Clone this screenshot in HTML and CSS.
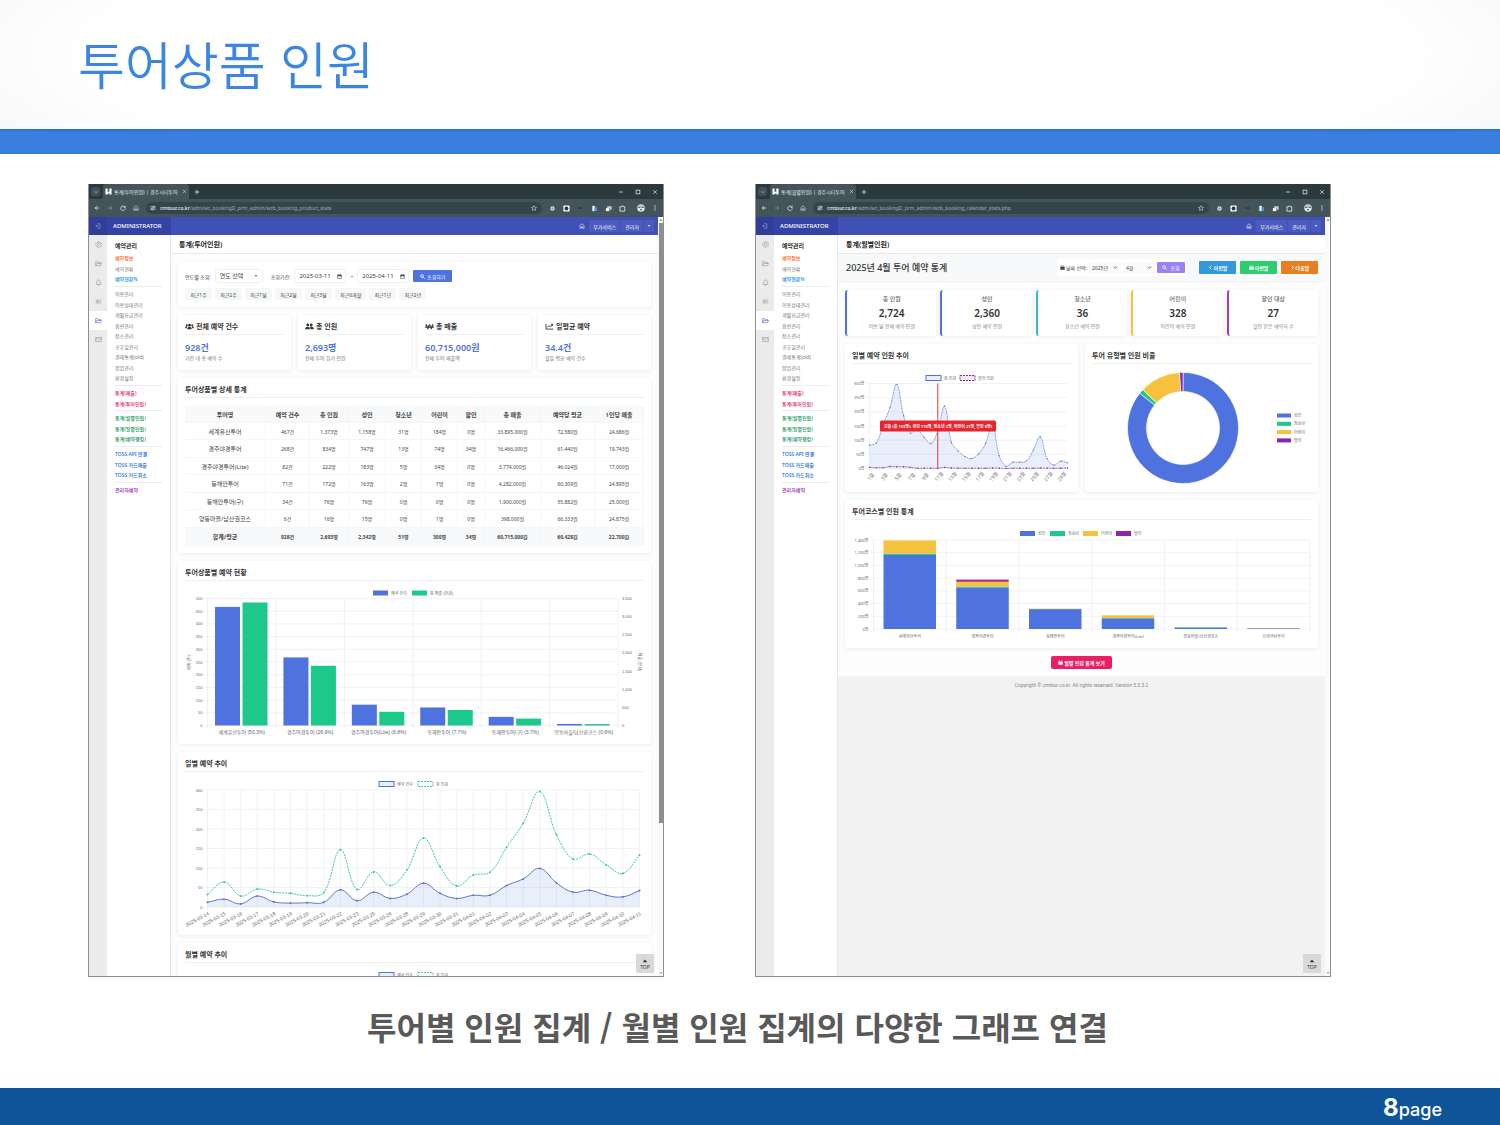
FILE: index.html
```
<!DOCTYPE html>
<html lang="ko">
<head>
  <meta charset="UTF-8">
  <meta name="viewport" content="width=device-width, initial-scale=1.0">
  <title>투어상품 인원</title>
  <link rel="stylesheet" href="styles.css">
</head>
<body>
  <!-- Shared icons -->
  <svg class="sprite" xmlns="http://www.w3.org/2000/svg">
    <symbol id="i-back" viewBox="0 0 16 16"><path d="M14 8H3M8 3L3 8l5 5" fill="none" stroke="currentColor" stroke-width="2"/></symbol>
    <symbol id="i-forward" viewBox="0 0 16 16"><path d="M2 8h11M8 3l5 5-5 5" fill="none" stroke="currentColor" stroke-width="2"/></symbol>
    <symbol id="i-reload" viewBox="0 0 16 16"><path d="M13 5.500A6 6 0 1 0 14 9M14 2v4.500H9.500" fill="none" stroke="currentColor" stroke-width="2"/></symbol>
    <symbol id="i-home" viewBox="0 0 16 16"><path d="M2.500 7L8 2l5.500 5v7h-4v-4h-3v4h-4z" fill="none" stroke="currentColor" stroke-width="1.600"/></symbol>
    <symbol id="i-tune" viewBox="0 0 16 16"><path d="M1 5h6M13 5h2M1 11h2M9 11h6" stroke="currentColor" stroke-width="2"/><circle cx="10" cy="5" r="2.500" fill="none" stroke="currentColor" stroke-width="2"/><circle cx="6" cy="11" r="2.500" fill="none" stroke="currentColor" stroke-width="2"/></symbol>
    <symbol id="i-star" viewBox="0 0 16 16"><path d="M8 1.500l2 4.500 4.800.5-3.600 3.200 1 4.800L8 12l-4.200 2.500 1-4.800L1.200 6.500 6 6z" fill="none" stroke="currentColor" stroke-width="1.400"/></symbol>
    <symbol id="i-down" viewBox="0 0 16 16"><path d="M3 5l5 6 5-6z" fill="currentColor"/></symbol>
    <symbol id="i-chevron" viewBox="0 0 16 16"><path d="M3 5.500l5 5 5-5" fill="none" stroke="currentColor" stroke-width="2.500"/></symbol>
    <symbol id="i-close" viewBox="0 0 16 16"><path d="M3 3l10 10M13 3L3 13" stroke="currentColor" stroke-width="1.800"/></symbol>
    <symbol id="i-plus" viewBox="0 0 16 16"><path d="M8 2v12M2 8h12" stroke="currentColor" stroke-width="2"/></symbol>
    <symbol id="i-min" viewBox="0 0 16 16"><path d="M3 8h10" stroke="currentColor" stroke-width="2"/></symbol>
    <symbol id="i-max" viewBox="0 0 16 16"><rect x="3" y="3" width="10" height="10" fill="none" stroke="currentColor" stroke-width="2"/></symbol>
    <symbol id="i-dots" viewBox="0 0 16 16"><g fill="currentColor"><circle cx="8" cy="2.500" r="1.800"/><circle cx="8" cy="8" r="1.800"/><circle cx="8" cy="13.500" r="1.800"/></g></symbol>
    <symbol id="i-blob" viewBox="0 0 16 16"><circle cx="8" cy="8" r="5" fill="#dfe5e8"/><path d="M8 2v12M2 8h12" stroke="#93a1a8" stroke-width="2"/></symbol>
    <symbol id="i-capture" viewBox="0 0 16 16"><rect x="1" y="1" width="14" height="14" rx="2" fill="#fff"/><circle cx="8" cy="8" r="4.500" fill="#2c383d"/></symbol>
    <symbol id="i-dark" viewBox="0 0 16 16"><path d="M3 5h10v4H3z" fill="#2f3c42"/></symbol>
    <symbol id="i-doc" viewBox="0 0 16 16"><path d="M3 2h6v12H3z" fill="#e9f1fb"/><path d="M8 5h6v9H8z" fill="#4a8ddb"/></symbol>
    <symbol id="i-cast" viewBox="0 0 16 16"><path d="M5 3h10v8h-4V7H5z" fill="#c6ced2"/><path d="M2 7h8v7H2z" fill="#f4f6f7"/></symbol>
    <symbol id="i-puzzle" viewBox="0 0 16 16"><path d="M2 4h4a2 2 0 0 1 4 0h3v4a2 2 0 0 1 0 3v3H2v-4a2 2 0 0 0 0-3z" fill="none" stroke="#fff" stroke-width="1.800"/></symbol>
    <symbol id="i-face" viewBox="0 0 16 16"><circle cx="8" cy="8" r="7.500" fill="#e6e6e6"/><path d="M2 6.500h5M9 6.500h5M6 11.500h4" stroke="#444" stroke-width="2"/><path d="M3 3.500h10" stroke="#999" stroke-width="1.500"/></symbol>
    <symbol id="i-logo" viewBox="0 0 16 16"><path d="M1 1h5v14H1zM10 1h5v14h-5zM6 10l4-3v4l-4 3z" fill="#fff"/></symbol>
    <symbol id="i-out" viewBox="0 0 16 16"><path d="M6 2h7v12H6M2 8h7M5 5L2 8l3 3" fill="none" stroke="currentColor" stroke-width="1.500"/></symbol>
    <symbol id="i-gear" viewBox="0 0 16 16"><path d="M6.500 1.500h3l.5 2 2 1 2-.5 1 2.500-1.500 1.500.5 2 1 1.500-2 2-2-.5-1.500 1.500h-3L6 12.500l-2 .5-2-2 .5-2L1 7.500l1-2.500 2 .0 2-1.500z" fill="none" stroke="currentColor"/><circle cx="8" cy="8" r="2.500" fill="none" stroke="currentColor"/></symbol>
    <symbol id="i-folder" viewBox="0 0 16 16"><path d="M1.500 13V3.500h4l1.500 2h6V8M1.500 13L4 8h11l-2.500 5z" fill="none" stroke="currentColor" stroke-width="1.200"/></symbol>
    <symbol id="i-bell" viewBox="0 0 16 16"><path d="M2.500 12.500h11L12 10V6a4 4 0 0 0-8 0v4zM6.500 14.500h3" fill="none" stroke="currentColor" stroke-width="1.200"/></symbol>
    <symbol id="i-card" viewBox="0 0 16 16"><path d="M1.500 4.500h13M1.500 8h13M1.500 11.500h13M5 4v8" stroke="currentColor" stroke-width="1"/></symbol>
    <symbol id="i-mail" viewBox="0 0 16 16"><path d="M1.500 3.500h13v9h-13zM1.500 4L8 9l6.500-5" fill="none" stroke="currentColor" stroke-width="1.200"/></symbol>
    <symbol id="i-search" viewBox="0 0 16 16"><circle cx="6.500" cy="6.500" r="4.500" fill="none" stroke="currentColor" stroke-width="2.400"/><path d="M10 10l5 5" stroke="currentColor" stroke-width="2.800"/></symbol>
    <symbol id="i-cal" viewBox="0 0 16 16"><path d="M2 3h12v11H2z" fill="none" stroke="currentColor" stroke-width="1.800"/><path d="M2 3h12v4H2zM4 1h2v3H4zM10 1h2v3h-2z" fill="currentColor"/></symbol>
    <symbol id="i-calfull" viewBox="0 0 16 16"><path d="M1 3h2V1h2v2h6V1h2v2h2v2H1zM1 6h14v9H1z" fill="currentColor"/></symbol>
    <symbol id="i-users" viewBox="0 0 20 16"><g fill="currentColor"><circle cx="10" cy="5" r="3.200"/><circle cx="3.800" cy="5" r="2.200"/><circle cx="16.200" cy="5" r="2.200"/><path d="M5 14c0-7 10-7 10 0zM0 12c0-5 4-5 5-3.500-1 1-1.500 2-1.500 3.500zM20 12c0-5-4-5-5-3.500 1 1 1.500 2 1.500 3.500z"/></g></symbol>
    <symbol id="i-pair" viewBox="0 0 20 16"><g fill="currentColor"><circle cx="6" cy="4.500" r="3.200"/><circle cx="14" cy="4.500" r="3.200"/><path d="M0 14c0-7 11-7 11 0zM12 14c0-3-.5-4-1.500-5 4-2 9.500 0 9.500 5z"/></g></symbol>
    <symbol id="i-won" viewBox="0 0 20 16"><path d="M2 2l4 12L10 3l4 11 4-12M0 7h20M0 10h20" fill="none" stroke="currentColor" stroke-width="2"/></symbol>
    <symbol id="i-trend" viewBox="0 0 20 16"><path d="M2 2v12h17M5 10l4-4 3 3 5-6M13 3h4v4" fill="none" stroke="currentColor" stroke-width="2"/></symbol>
    <symbol id="i-left" viewBox="0 0 16 16"><path d="M10.500 2l-6 6 6 6" fill="none" stroke="currentColor" stroke-width="2.800"/></symbol>
    <symbol id="i-right" viewBox="0 0 16 16"><path d="M5.500 2l6 6-6 6" fill="none" stroke="currentColor" stroke-width="2.800"/></symbol>
    <symbol id="i-up" viewBox="0 0 16 16"><path d="M2 11l6-7 6 7z" fill="currentColor"/></symbol>
  </svg>

  <header class="slide-header">
    <h1>투어상품 인원</h1>
  </header>

  <main class="slide-body">
    <div class="windows">

      <!-- Product statistics -->
      <section class="window">
        <div class="tabbar">
          <button class="tab-search" aria-label="탭 검색"><svg class="ico"><use href="#i-chevron"/></svg></button>
          <div class="tab"><svg class="ico logo"><use href="#i-logo"/></svg><span>통계(투어인원) | 경주시티투어</span><svg class="ico"><use href="#i-close"/></svg></div>
          <svg class="ico"><use href="#i-plus"/></svg>
          <div class="win-controls"><svg class="ico"><use href="#i-min"/></svg><svg class="ico"><use href="#i-max"/></svg><svg class="ico"><use href="#i-close"/></svg></div>
        </div>
        <div class="toolbar">
          <svg class="ico"><use href="#i-back"/></svg>
          <svg class="ico dim"><use href="#i-forward"/></svg>
          <svg class="ico"><use href="#i-reload"/></svg>
          <svg class="ico"><use href="#i-home"/></svg>
          <div class="address"><svg class="ico"><use href="#i-tune"/></svg><span class="url"><b>cmtour.co.kr</b>/adm/wz_bookingD_prm_admin/wzb_booking_product_stats</span><svg class="ico"><use href="#i-star"/></svg></div>
          <div class="extensions">
            <svg class="ico"><use href="#i-blob"/></svg><svg class="ico"><use href="#i-capture"/></svg><svg class="ico"><use href="#i-dark"/></svg><svg class="ico"><use href="#i-doc"/></svg><svg class="ico"><use href="#i-cast"/></svg><svg class="ico"><use href="#i-puzzle"/></svg>
          </div>
          <svg class="ico face"><use href="#i-face"/></svg>
          <svg class="ico"><use href="#i-dots"/></svg>
        </div>
        <div class="viewport">
          <div class="app">
            <div class="app-header">
              <span class="app-toggle"><svg class="ico"><use href="#i-out"/></svg></span>
              <strong class="brand">ADMINISTRATOR</strong>
              <div class="app-nav">
                <svg class="ico"><use href="#i-home"/></svg>
                <button>부가서비스</button>
                <button>관리자</button>
                <button aria-label="메뉴"><svg class="ico"><use href="#i-down"/></svg></button>
              </div>
            </div>
            <div class="app-body">
              <div class="rail">
                <span><svg class="ico"><use href="#i-gear"/></svg></span>
                <span><svg class="ico"><use href="#i-folder"/></svg></span>
                <span><svg class="ico"><use href="#i-bell"/></svg></span>
                <span><svg class="ico"><use href="#i-card"/></svg></span>
                <span class="active"><svg class="ico"><use href="#i-folder"/></svg></span>
                <span><svg class="ico"><use href="#i-mail"/></svg></span>
              </div>
              <nav class="side">
                <h2>예약관리</h2>
                <ul>
                  <li class="orange"><a href="#">예약정보</a></li>
                  <li><a href="#">예약현황</a></li>
                  <li class="sky"><a href="#">예약현황N</a></li>
                </ul>
                <ul>
                  <li><a href="#">이용관리</a></li>
                  <li><a href="#">이용상태관리</a></li>
                  <li><a href="#">개별요금관리</a></li>
                  <li><a href="#">옵션관리</a></li>
                  <li><a href="#">장소관리</a></li>
                  <li><a href="#">공휴일관리</a></li>
                  <li><a href="#">결제통계(old)</a></li>
                  <li><a href="#">팝업관리</a></li>
                  <li><a href="#">환경설정</a></li>
                </ul>
                <ul class="pink">
                  <li><a href="#">통계(매출)</a></li>
                  <li><a href="#">통계(투어인원)</a></li>
                </ul>
                <ul class="green">
                  <li><a href="#">통계(월별인원)</a></li>
                  <li><a href="#">통계(일별인원)</a></li>
                  <li><a href="#">통계(예약랭킹)</a></li>
                </ul>
                <ul class="blue">
                  <li><a href="#">TOSS API 연결</a></li>
                  <li><a href="#">TOSS 카드매출</a></li>
                  <li><a href="#">TOSS 카드취소</a></li>
                </ul>
                <ul class="purple">
                  <li><a href="#">관리자예약</a></li>
                </ul>
              </nav>
              <div class="content">
                <h2 class="page-title">통계(투어인원)</h2>
                <div class="stack">
                  <form class="card filter">
                    <div class="filter-row">
                      <label for="year">연도별 조회:</label>
                      <span class="select"><select id="year"><option>연도 선택</option></select><svg class="ico"><use href="#i-down"/></svg></span>
                      <label for="from">조회기간:</label>
                      <span class="date"><input id="from" type="text" value="2025-03-11"><svg class="ico"><use href="#i-cal"/></svg></span>
                      <span>~</span>
                      <span class="date"><input type="text" value="2025-04-11" aria-label="종료일"><svg class="ico"><use href="#i-cal"/></svg></span>
                      <button type="button" class="btn-search"><svg class="ico"><use href="#i-search"/></svg>조회하기</button>
                    </div>
                    <div class="presets">
                      <button type="button">최근1주</button>
                      <button type="button">최근2주</button>
                      <button type="button">최근1달</button>
                      <button type="button">최근2달</button>
                      <button type="button">최근3달</button>
                      <button type="button">최근6개월</button>
                      <button type="button">최근1년</button>
                      <button type="button">최근2년</button>
                    </div>
                  </form>

                  <div class="summary">
                    <div class="card"><h3><svg class="ico wide"><use href="#i-users"/></svg>전체 예약 건수</h3><strong>928건</strong><p>기간 내 총 예약 수</p></div>
                    <div class="card"><h3><svg class="ico wide"><use href="#i-pair"/></svg>총 인원</h3><strong>2,693명</strong><p>전체 투어 참가 인원</p></div>
                    <div class="card"><h3><svg class="ico wide"><use href="#i-won"/></svg>총 매출</h3><strong>60,715,000원</strong><p>전체 투어 매출액</p></div>
                    <div class="card"><h3><svg class="ico wide"><use href="#i-trend"/></svg>일평균 예약</h3><strong>34.4건</strong><p>월일 평균 예약 건수</p></div>
                  </div>

                  <div class="card">
                    <h3>투어상품별 상세 통계</h3>
                    <table class="stats">
                      <thead>
                        <tr><th>투어명</th><th>예약 건수</th><th>총 인원</th><th>성인</th><th>청소년</th><th>어린이</th><th>할인</th><th>총 매출</th><th>예약당 평균</th><th>1인당 매출</th></tr>
                      </thead>
                      <tbody>
                        <tr><td>세계유산투어</td><td>467건</td><td>1,373명</td><td>1,158명</td><td>31명</td><td>184명</td><td>0명</td><td>33,895,000원</td><td>72,580원</td><td>24,686원</td></tr>
                        <tr><td>경주야경투어</td><td>268건</td><td>834명</td><td>747명</td><td>13명</td><td>74명</td><td>34명</td><td>16,466,000원</td><td>61,440원</td><td>19,743원</td></tr>
                        <tr><td>경주야경투어(Lite)</td><td>82건</td><td>222명</td><td>183명</td><td>5명</td><td>34명</td><td>0명</td><td>3,774,000원</td><td>46,024원</td><td>17,000원</td></tr>
                        <tr><td>동해안투어</td><td>71건</td><td>172명</td><td>163명</td><td>2명</td><td>7명</td><td>0명</td><td>4,282,000원</td><td>60,309원</td><td>24,895원</td></tr>
                        <tr><td>동해안투어(구)</td><td>34건</td><td>76명</td><td>76명</td><td>0명</td><td>0명</td><td>0명</td><td>1,900,000원</td><td>55,882원</td><td>25,000원</td></tr>
                        <tr><td>양동마을/남산권코스</td><td>6건</td><td>16명</td><td>15명</td><td>0명</td><td>1명</td><td>0명</td><td>398,000원</td><td>66,333원</td><td>24,875원</td></tr>
                      </tbody>
                      <tfoot>
                        <tr><td>합계/평균</td><td>928건</td><td>2,693명</td><td>2,342명</td><td>51명</td><td>300명</td><td>34명</td><td>60,715,000원</td><td>60,428원</td><td>22,700원</td></tr>
                      </tfoot>
                    </table>
                  </div>

                  <div class="card">
                    <h3>투어상품별 예약 현황</h3>
                    <svg class="chart" id="productChart" viewBox="0 0 459 152"></svg>
                  </div>

                  <div class="card">
                    <h3>일별 예약 추이</h3>
                    <svg class="chart" id="dailyChart" viewBox="0 0 459 152"></svg>
                  </div>

                  <div class="card">
                    <h3>월별 예약 추이</h3>
                    <svg class="chart" id="monthlyChart" viewBox="0 0 459 152"></svg>
                  </div>
                </div>
              </div>
            </div>
          </div>
          <div class="scrollbar"><svg class="ico"><use href="#i-up"/></svg><span class="thumb"></span><svg class="ico"><use href="#i-down"/></svg></div>
          <button class="to-top"><svg class="ico"><use href="#i-up"/></svg>TOP</button>
        </div>
      </section>

      <!-- Monthly statistics -->
      <section class="window">
        <div class="tabbar">
          <button class="tab-search" aria-label="탭 검색"><svg class="ico"><use href="#i-chevron"/></svg></button>
          <div class="tab"><svg class="ico logo"><use href="#i-logo"/></svg><span>통계(월별인원) | 경주시티투어</span><svg class="ico"><use href="#i-close"/></svg></div>
          <svg class="ico"><use href="#i-plus"/></svg>
          <div class="win-controls"><svg class="ico"><use href="#i-min"/></svg><svg class="ico"><use href="#i-max"/></svg><svg class="ico"><use href="#i-close"/></svg></div>
        </div>
        <div class="toolbar">
          <svg class="ico"><use href="#i-back"/></svg>
          <svg class="ico dim"><use href="#i-forward"/></svg>
          <svg class="ico"><use href="#i-reload"/></svg>
          <svg class="ico"><use href="#i-home"/></svg>
          <div class="address"><svg class="ico"><use href="#i-tune"/></svg><span class="url"><b>cmtour.co.kr</b>/adm/wz_bookingD_prm_admin/wzb_booking_calendar_stats.php</span><svg class="ico"><use href="#i-star"/></svg></div>
          <div class="extensions">
            <svg class="ico"><use href="#i-blob"/></svg><svg class="ico"><use href="#i-capture"/></svg><svg class="ico"><use href="#i-dark"/></svg><svg class="ico"><use href="#i-doc"/></svg><svg class="ico"><use href="#i-cast"/></svg><svg class="ico"><use href="#i-puzzle"/></svg>
          </div>
          <svg class="ico face"><use href="#i-face"/></svg>
          <svg class="ico"><use href="#i-dots"/></svg>
        </div>
        <div class="viewport">
          <div class="app">
            <div class="app-header">
              <span class="app-toggle"><svg class="ico"><use href="#i-out"/></svg></span>
              <strong class="brand">ADMINISTRATOR</strong>
              <div class="app-nav">
                <svg class="ico"><use href="#i-home"/></svg>
                <button>부가서비스</button>
                <button>관리자</button>
                <button aria-label="메뉴"><svg class="ico"><use href="#i-down"/></svg></button>
              </div>
            </div>
            <div class="app-body">
              <div class="rail">
                <span><svg class="ico"><use href="#i-gear"/></svg></span>
                <span><svg class="ico"><use href="#i-folder"/></svg></span>
                <span><svg class="ico"><use href="#i-bell"/></svg></span>
                <span><svg class="ico"><use href="#i-card"/></svg></span>
                <span class="active"><svg class="ico"><use href="#i-folder"/></svg></span>
                <span><svg class="ico"><use href="#i-mail"/></svg></span>
              </div>
              <nav class="side">
                <h2>예약관리</h2>
                <ul>
                  <li class="orange"><a href="#">예약정보</a></li>
                  <li><a href="#">예약현황</a></li>
                  <li class="sky"><a href="#">예약현황N</a></li>
                </ul>
                <ul>
                  <li><a href="#">이용관리</a></li>
                  <li><a href="#">이용상태관리</a></li>
                  <li><a href="#">개별요금관리</a></li>
                  <li><a href="#">옵션관리</a></li>
                  <li><a href="#">장소관리</a></li>
                  <li><a href="#">공휴일관리</a></li>
                  <li><a href="#">결제통계(old)</a></li>
                  <li><a href="#">팝업관리</a></li>
                  <li><a href="#">환경설정</a></li>
                </ul>
                <ul class="pink">
                  <li><a href="#">통계(매출)</a></li>
                  <li><a href="#">통계(투어인원)</a></li>
                </ul>
                <ul class="green">
                  <li><a href="#">통계(월별인원)</a></li>
                  <li><a href="#">통계(일별인원)</a></li>
                  <li><a href="#">통계(예약랭킹)</a></li>
                </ul>
                <ul class="blue">
                  <li><a href="#">TOSS API 연결</a></li>
                  <li><a href="#">TOSS 카드매출</a></li>
                  <li><a href="#">TOSS 카드취소</a></li>
                </ul>
                <ul class="purple">
                  <li><a href="#">관리자예약</a></li>
                </ul>
              </nav>
              <div class="content">
                <h2 class="page-title">통계(월별인원)</h2>
                <div class="month-bar">
                  <h3>2025년 4월 투어 예약 통계</h3>
                  <form class="month-form">
                    <label for="selYear"><svg class="ico"><use href="#i-calfull"/></svg>날짜 선택:</label>
                    <span class="select"><select id="selYear"><option>2025년</option></select><svg class="ico"><use href="#i-chevron"/></svg></span>
                    <span class="select"><select aria-label="월"><option>4월</option></select><svg class="ico"><use href="#i-chevron"/></svg></span>
                    <button type="button" class="btn-query"><svg class="ico"><use href="#i-search"/></svg>조회</button>
                  </form>
                  <div class="month-nav">
                    <button class="prev"><svg class="ico"><use href="#i-left"/></svg>이전달</button>
                    <button class="this"><svg class="ico"><use href="#i-calfull"/></svg>이번달</button>
                    <button class="next"><svg class="ico"><use href="#i-right"/></svg>다음달</button>
                  </div>
                </div>
                <div class="stack">
                  <div class="counts">
                    <div class="count total"><h4>총 인원</h4><strong>2,724</strong><p>이번 달 전체 예약 인원</p></div>
                    <div class="count adult"><h4>성인</h4><strong>2,360</strong><p>성인 예약 인원</p></div>
                    <div class="count teen"><h4>청소년</h4><strong>36</strong><p>청소년 예약 인원</p></div>
                    <div class="count child"><h4>어린이</h4><strong>328</strong><p>어린이 예약 인원</p></div>
                    <div class="count sale"><h4>할인 대상</h4><strong>27</strong><p>할인 받은 예약자 수</p></div>
                  </div>
                  <div class="pair">
                    <div class="card">
                      <h3>일별 예약 인원 추이</h3>
                      <svg class="chart" id="monthDays" viewBox="0 0 219 117"></svg>
                    </div>
                    <div class="card">
                      <h3>투어 유형별 인원 비율</h3>
                      <svg class="chart" id="typeRatio" viewBox="0 0 219 117"></svg>
                    </div>
                  </div>
                  <div class="card">
                    <h3>투어코스별 인원 통계</h3>
                    <svg class="chart" id="courseChart" viewBox="0 0 459 117"></svg>
                  </div>
                  <button class="btn-ranking"><svg class="ico"><use href="#i-calfull"/></svg>월별 인원 통계 보기</button>
                </div>
                <footer class="app-footer">Copyright © cmtour.co.kr. All rights reserved. Version 5.3.3.2</footer>
              </div>
            </div>
          </div>
          <div class="scrollbar empty"><svg class="ico"><use href="#i-up"/></svg><svg class="ico"><use href="#i-down"/></svg></div>
          <button class="to-top"><svg class="ico"><use href="#i-up"/></svg>TOP</button>
        </div>
      </section>
    </div>

    <p class="caption">투어별 인원 집계 / 월별 인원 집계의 다양한 그래프 연결</p>
  </main>

  <footer class="slide-footer"><b>8</b><span>page</span></footer>

  <script src="charts.js"></script>
</body>
</html>
```

FILE: styles.css
```
* {
  box-sizing: border-box;
}

body {
  margin: 0;
  min-height: 100vh;
  display: flex;
  flex-direction: column;
  background: #fff;
  color: #444;
  font-family: "Noto Sans", "Noto Sans CJK KR", sans-serif;
  font-size: 5px;
}

h1, h2, h3, h4, p, ul {
  margin: 0;
  padding: 0;
}

ul {
  list-style: none;
}

a {
  color: inherit;
  text-decoration: none;
}

button, input, select {
  font-family: inherit;
  font-size: 5px;
  color: inherit;
  border: 0;
  margin: 0;
  padding: 0;
  background: none;
}

.sprite {
  display: none;
}

.ico {
  width: 6px;
  height: 6px;
  flex: none;
}

.ico.wide {
  width: 9px;
  height: 7px;
}

/* Slide */
.slide-header {
  height: 154px;
  padding: 24px 78px 0;
  background:
    linear-gradient(#2e6fd0, #3a7edf 4px, #3a7edf 22px, #3576d6) bottom / 100% 25px no-repeat,
    radial-gradient(ellipse 62% 130% at 50% 35%, #fff 70%, #e9e9e9 130%);
}

.slide-header h1 {
  font-family: "Noto Sans CJK KR", sans-serif;
  font-size: 51px;
  line-height: 78px;
  font-weight: 350;
  color: #3b86e0;
}

.slide-body {
  flex: 1;
  padding: 30px 169px 30px 88px;
}

.windows {
  display: grid;
  grid-template-columns: 1fr 1fr;
  gap: 91px;
}

.caption {
  margin-top: 25px;
  text-align: center;
  font-family: "Noto Sans CJK KR", sans-serif;
  font-size: 32px;
  line-height: 48px;
  font-weight: 700;
  color: #595959;
  padding-left: 56px;
}

.slide-footer {
  height: 37px;
  padding-right: 58px;
  display: flex;
  justify-content: flex-end;
  align-items: baseline;
  background: #0f5499;
  color: #fff;
  font-family: Inter, sans-serif;
  font-size: 18px;
  line-height: 40px;
  font-weight: 500;
}

.slide-footer b {
  font-size: 24px;
  font-weight: 700;
}

/* Browser window */
.window {
  aspect-ratio: 576 / 793;
  min-width: 0;
  display: flex;
  flex-direction: column;
  overflow: hidden;
  border: solid #8a8f92;
  border-width: 0 1px 1px;
  background: #fff;
}

.tabbar {
  height: 15px;
  display: flex;
  align-items: center;
  gap: 5px;
  padding: 0 5px 0 2px;
  background: #2c393e;
  color: #e4e9eb;
}

.tab-search {
  width: 9px;
  height: 9px;
  border-radius: 3px;
  background: #43525a;
  display: flex;
  align-items: center;
  justify-content: center;
}

.tab-search .ico {
  width: 4px;
  height: 4px;
}

.tab {
  height: 15px;
  margin: 0 0 0 -2px;
  padding: 0 2px;
  display: flex;
  align-items: center;
  gap: 2px;
  border-radius: 3px 3px 0 0;
  background: #43545b;
}

.tab .ico {
  width: 5px;
  height: 5px;
  margin-left: 2px;
}

.tab .logo {
  width: 7px;
  height: 7px;
  margin: 0;
}

.win-controls {
  margin-left: auto;
  display: flex;
  gap: 11px;
}

.toolbar {
  height: 18px;
  display: flex;
  align-items: center;
  gap: 7px;
  padding: 0 5px;
  background: #43545b;
  color: #e4e9eb;
}

.toolbar .ico {
  width: 6px;
  height: 6px;
}

.toolbar .dim {
  opacity: 0.4;
}

.address {
  flex: 1;
  height: 12px;
  display: flex;
  align-items: center;
  gap: 4px;
  padding: 0 5px 0 4px;
  border-radius: 6px;
  background: #34444b;
}

.url {
  flex: 1;
  color: #9fabb0;
}

.url b {
  font-weight: 500;
  color: #f2f5f6;
}

.extensions {
  display: flex;
  gap: 7px;
  padding-right: 4px;
}

.extensions .ico {
  width: 7px;
  height: 7px;
}

.toolbar .face {
  width: 8px;
  height: 8px;
}

.viewport {
  position: relative;
  flex: 1;
  min-height: 0;
  display: flex;
}

.app {
  flex: 1;
  min-width: 0;
  display: flex;
  flex-direction: column;
}

.scrollbar {
  width: 5px;
  display: flex;
  flex-direction: column;
  align-items: center;
  background: #fafafa;
  color: #777;
}

.scrollbar .ico {
  width: 4px;
  height: 6px;
}

.scrollbar .thumb {
  width: 4px;
  height: 79%;
  margin-bottom: auto;
  background: #8f8f8f;
}

.scrollbar.empty {
  justify-content: space-between;
}

.to-top {
  position: absolute;
  right: 9px;
  bottom: 3px;
  width: 18px;
  height: 19px;
  display: flex;
  flex-direction: column;
  align-items: center;
  justify-content: center;
  background: #d9d9d9;
  color: #333;
  line-height: 6px;
}

/* Admin app */
.app-header {
  height: 18px;
  flex: none;
  display: flex;
  align-items: center;
  background: #3f51b5;
  color: #fff;
}

.app-toggle {
  width: 18px;
  height: 18px;
  display: flex;
  align-items: center;
  justify-content: center;
  background: #303e9a;
  color: #aab2e6;
}

.brand {
  width: 64px;
  padding-left: 6px;
  line-height: 18px;
  font-size: 6px;
  font-weight: 500;
  background: #3544a4;
}

.app-nav {
  margin-left: auto;
  padding-right: 4px;
  display: flex;
  align-items: center;
  gap: 1px;
}

.app-nav > .ico {
  margin-right: 3px;
}

.app-nav button {
  height: 12px;
  padding: 0 4px;
  background: #4a5bbd;
}

.app-nav button:last-child {
  padding: 0 3px;
}

.app-nav button .ico {
  width: 4px;
  height: 4px;
}

.app-body {
  flex: 1;
  min-height: 0;
  display: flex;
}

.rail {
  width: 18px;
  background: #ebebeb;
  color: #8a8a8a;
}

.rail span {
  height: 19px;
  display: flex;
  align-items: center;
  justify-content: center;
}

.rail .ico {
  width: 7px;
  height: 7px;
}

.rail .active {
  background: #fff;
  color: #3f51b5;
}

.side {
  width: 64px;
  padding: 6px 8px;
  border-right: 1px solid #e8e8e8;
  background: #fff;
  color: #777;
}

.side h2 {
  font-size: 6px;
  line-height: 10px;
  font-weight: 600;
  color: #333;
}

.side ul {
  padding: 2px 0 1px;
  border-bottom: 1px solid #ebebeb;
}

.side ul:last-child {
  border-bottom: 0;
}

.side li {
  line-height: 11px;
}

.side li:nth-child(even) {
  line-height: 10px;
}

.orange { color: #ff5722; }
.sky { color: #0d8fe0; }
.pink { color: #e0245e; }
.green { color: #11935a; }
.blue { color: #1668d8; }
.purple { color: #9027b0; }

.orange, .sky, .pink, .green, .blue, .purple {
  font-weight: 500;
}

.content {
  flex: 1;
  min-width: 0;
  display: flex;
  flex-direction: column;
  background: #fdfdfd;
}

.page-title {
  height: 19px;
  flex: none;
  padding-left: 8px;
  font-size: 7px;
  line-height: 20px;
  font-weight: 600;
  color: #222;
  border-bottom: 1px solid #e8e8e8;
  background: #fff;
}

.stack {
  display: flex;
  flex-direction: column;
  gap: 8px;
  padding: 8px 7px 0;
}

.card {
  padding: 7px;
  border-radius: 3px;
  background: #fff;
  box-shadow: 0 1px 4px rgba(0, 0, 0, 0.07);
}

.card h3 {
  display: flex;
  align-items: center;
  gap: 2px;
  padding-bottom: 3px;
  border-bottom: 1px solid #f0f0f0;
  font-size: 7px;
  line-height: 9px;
  font-weight: 600;
  color: #333;
}

.chart {
  display: block;
  width: 100%;
  margin-top: 4px;
}

.chart text {
  font-size: 4px;
  fill: #666;
}

#productChart text, #dailyChart text, #monthlyChart text {
  font-family: "Liberation Sans", "Noto Sans CJK KR", sans-serif;
}

.chart .ko {
  font-size: 5px;
}

.chart .note {
  font-weight: 700;
  fill: #fff;
}

.filter-row {
  display: flex;
  align-items: center;
  gap: 4px;
}

.select, .date {
  height: 14px;
  display: flex;
  align-items: center;
  border: 1px solid #f0f0f0;
  border-radius: 2px;
  background: #fff;
}

.select {
  padding: 0 4px;
}

.select select {
  appearance: none;
  width: 34px;
  font-size: 6px;
}

.select .ico {
  width: 4px;
  height: 4px;
}

.date {
  width: 52px;
  padding: 0 4px;
  gap: 4px;
}

.date input {
  width: 34px;
  font-size: 6px;
}

.date .ico {
  width: 5px;
  height: 5px;
}

.filter label:nth-of-type(2) {
  margin-left: 4px;
}

.btn-search {
  width: 39px;
  height: 12px;
  display: flex;
  align-items: center;
  justify-content: center;
  gap: 2px;
  border-radius: 1px;
  background: #4e73df;
  color: #fff;
}

.btn-search .ico {
  width: 5px;
  height: 5px;
}

.presets {
  display: flex;
  gap: 3px;
  margin-top: 5px;
}

.presets button {
  height: 12px;
  min-width: 27px;
  padding: 0 5px;
  border-radius: 2px;
  background: #f6f8f8;
}

.summary {
  display: grid;
  grid-template-columns: repeat(4, 1fr);
  gap: 7px;
}

.summary strong {
  display: block;
  margin-top: 6px;
  font-size: 9px;
  line-height: 13px;
  font-weight: 600;
  color: #4e73df;
}

.summary p {
  line-height: 9px;
  color: #777;
}

.stats {
  width: 100%;
  margin-top: 8px;
  table-layout: fixed;
  border-spacing: 0;
  text-align: center;
}

.stats tr {
  height: 17px;
}

.stats tbody tr:nth-child(even), .stats tfoot tr {
  height: 18px;
}

.stats th, .stats td {
  padding: 0;
  border: solid #f5f6f7;
  border-width: 0 1px 1px 0;
}

.stats th {
  font-size: 6px;
  font-weight: 600;
  background: #f8f9fa;
}

.stats td:first-child {
  font-size: 6px;
}

.stats tfoot td {
  font-weight: 700;
  background: #f8f9fa;
}

.stats th:nth-child(1) { width: 81px; }
.stats th:nth-child(2) { width: 44px; }
.stats th:nth-child(3) { width: 39px; }
.stats th:nth-child(4) { width: 37px; }
.stats th:nth-child(5) { width: 36px; }
.stats th:nth-child(6) { width: 36px; }
.stats th:nth-child(7) { width: 27px; }
.stats th:nth-child(8) { width: 56px; }
.stats th:nth-child(9) { width: 54px; }
.stats th:nth-child(10) { width: 49px; }

/* Monthly page */
.month-bar {
  height: 28px;
  display: flex;
  align-items: center;
  padding: 0 7px 0 8px;
  background: #f8f9fa;
  border-bottom: 1px solid #f0f2f3;
}

.month-bar h3 {
  font-size: 9px;
  font-weight: 500;
  color: #333;
}

.month-form {
  height: 17px;
  margin-left: auto;
  padding: 0 2px 0 3px;
  display: flex;
  align-items: center;
  gap: 2px;
  border-radius: 2px;
  background: #fff;
}

.month-form label {
  display: flex;
  align-items: center;
  gap: 1px;
}

.month-form .select {
  height: 12px;
  padding: 0 3px;
  background: #fafafa;
  border: 0;
}

.month-form select {
  width: auto;
  min-width: 17px;
  margin-right: 4px;
  font-size: 5px;
}

.btn-query {
  width: 28px;
  height: 11px;
  display: flex;
  align-items: center;
  justify-content: center;
  gap: 3px;
  border-radius: 1px;
  background: #9b82f3;
  color: #fff;
}

.month-nav {
  display: flex;
  gap: 4px;
  margin-left: 12px;
}

.month-nav button {
  width: 37px;
  height: 13px;
  display: flex;
  align-items: center;
  justify-content: center;
  gap: 1px;
  border-radius: 1px;
  color: #fff;
  font-weight: 700;
}

.month-nav .prev { background: #3498db; }
.month-nav .this { background: #2ecc71; }
.month-nav .next { background: #e67e22; }

.month-nav .ico, .month-form .ico {
  width: 5px;
  height: 5px;
}

.counts {
  display: grid;
  grid-template-columns: repeat(5, 1fr);
  gap: 4px;
}

.count {
  padding: 5px 0;
  text-align: center;
  border-left: 2px solid #4e73df;
  border-radius: 3px;
  background: #fff;
  box-shadow: 0 1px 4px rgba(0, 0, 0, 0.07);
}

.count h4 {
  font-size: 6px;
  line-height: 9px;
  font-weight: 500;
  color: #666;
}

.count strong {
  display: block;
  margin: 2px 0 1px;
  font-size: 10px;
  line-height: 15px;
  font-weight: 600;
  color: #333;
}

.count p {
  line-height: 9px;
  color: #888;
}

.count.teen { border-color: #36b9cc; }
.count.child { border-color: #f6c23e; }
.count.sale { border-color: #9b3fb5; }

.pair {
  display: grid;
  grid-template-columns: 1fr 1fr;
  gap: 7px;
}

.btn-ranking {
  align-self: center;
  width: 61px;
  height: 13px;
  display: flex;
  align-items: center;
  justify-content: center;
  gap: 1px;
  border-radius: 2px;
  background: #e91e63;
  color: #fff;
  font-weight: 700;
}

.btn-ranking .ico {
  width: 5px;
  height: 5px;
}

.app-footer {
  flex: 1;
  margin-top: 7px;
  line-height: 18px;
  text-align: center;
  background: #f2f2f2;
  color: #888;
  font-family: Roboto, sans-serif;
}
```

FILE: charts.js
```
const NS = 'http://www.w3.org/2000/svg';
const BLUE = '#4e73df';
const GREEN = '#1cc88a';
const YELLOW = '#f6c23e';
const PURPLE = '#8e24aa';
const GRID = '#ececec';

// Small helpers
function add(svg, name, attrs, text) {
  const el = document.createElementNS(NS, name);
  for (const key in attrs) el.setAttribute(key, attrs[key]);
  if (text !== undefined) el.textContent = text;
  svg.appendChild(el);
  return el;
}

function label(svg, x, y, text, anchor, cls, angle) {
  const attrs = { x, y, 'text-anchor': anchor || 'start', 'dominant-baseline': 'central' };
  if (cls) attrs.class = cls;
  if (angle) attrs.transform = `rotate(${angle} ${x} ${y})`;
  add(svg, 'text', attrs, text);
}

function hline(svg, box, y) {
  add(svg, 'path', { d: `M${box.left - 3} ${y}H${box.right}`, stroke: GRID, 'stroke-width': 0.7 });
}

function vline(svg, box, x) {
  add(svg, 'path', { d: `M${x} ${box.top}V${box.bottom + 3}`, stroke: GRID, 'stroke-width': 0.7 });
}

function yAxis(svg, box, max, step, suffix) {
  for (let v = 0; v <= max; v += step) {
    const y = box.bottom - (box.bottom - box.top) * v / max;
    hline(svg, box, y);
    label(svg, box.left - 5, y, v.toLocaleString('en-US') + suffix, 'end');
  }
}

// Smooth line through all points
function curve(pts, tension) {
  let d = `M${pts[0][0]} ${pts[0][1]}`;
  const ctrl = pts.map((p, i) => {
    const a = pts[i - 1] || p;
    const b = pts[i + 1] || p;
    const d1 = Math.hypot(p[0] - a[0], p[1] - a[1]);
    const d2 = Math.hypot(b[0] - p[0], b[1] - p[1]);
    const f1 = tension * d1 / (d1 + d2 || 1);
    const f2 = tension * d2 / (d1 + d2 || 1);
    return [p[0] - f1 * (b[0] - a[0]), p[1] - f1 * (b[1] - a[1]), p[0] + f2 * (b[0] - a[0]), p[1] + f2 * (b[1] - a[1])];
  });
  for (let i = 1; i < pts.length; i++) {
    d += `C${ctrl[i - 1][2]} ${ctrl[i - 1][3]} ${ctrl[i][0]} ${ctrl[i][1]} ${pts[i][0]} ${pts[i][1]}`;
  }
  return d;
}

function drawLine(svg, box, max, values, color, dash, fill, width) {
  const step = (box.right - box.left) / (values.length - 1);
  const pts = values.map((v, i) => [box.left + i * step, box.bottom - (box.bottom - box.top) * v / max]);
  const d = curve(pts, 0.4);
  if (fill) add(svg, 'path', { d: `${d}V${box.bottom}H${box.left}Z`, fill, opacity: 0.12 });
  add(svg, 'path', { d, fill: 'none', stroke: color, 'stroke-width': width, 'stroke-dasharray': dash });
  pts.forEach(p => add(svg, 'circle', { cx: p[0], cy: p[1], r: width, fill: color }));
}

function legend(svg, items, y) {
  items.forEach(it => {
    add(svg, 'rect', {
      x: it.x, y: y - 2.5, width: 15, height: 5, fill: it.fill || it.color,
      stroke: it.fill ? it.color : 'none', 'stroke-dasharray': it.dash || 'none'
    });
    label(svg, it.x + 18, y, it.text, 'start', it.cls);
  });
}

// Bookings and sales per product
function productChart() {
  const svg = document.getElementById('productChart');
  const box = { left: 22.5, right: 433, top: 13.5, bottom: 140.5 };
  const names = ['세계유산투어 (50.3%)', '경주야경투어 (28.9%)', '경주야경투어(Lite) (8.8%)', '동해안투어 (7.7%)', '동해안투어(구) (3.7%)', '양동마을/남산권코스 (0.6%)'];
  const counts = [467, 268, 82, 71, 34, 6];
  const sales = [3389.5, 1646.6, 377.4, 428.2, 190, 39.8];
  const h = box.bottom - box.top;
  const w = (box.right - box.left) / names.length;
  yAxis(svg, box, 500, 50, '');
  for (let v = 0; v <= 3500; v += 500) {
    label(svg, box.right + 4, box.bottom - h * v / 3500, v.toLocaleString('en-US'));
  }
  for (let i = 0; i <= names.length; i++) vline(svg, box, box.left + i * w);
  names.forEach((name, i) => {
    const x = box.left + i * w + 7.5;
    const h1 = h * counts[i] / 500;
    const h2 = h * sales[i] / 3500;
    add(svg, 'rect', { x, y: box.bottom - h1, width: 25, height: h1, fill: BLUE });
    add(svg, 'rect', { x: x + 27.5, y: box.bottom - h2, width: 25, height: h2, fill: GREEN });
    label(svg, box.left + (i + 0.5) * w, 147, name, 'middle', 'ko');
  });
  label(svg, 4, 77, '예약 건수', 'middle', '', -90);
  label(svg, 454, 77, '매출 (만원)', 'middle', '', 90);
  legend(svg, [{ x: 188, color: BLUE, text: '예약 건수' }, { x: 227, color: GREEN, text: '총 매출 (만원)' }], 8);
}

// Bookings and people per day
function trendLegend(svg) {
  legend(svg, [
    { x: 194, color: BLUE, fill: '#e9eefb', text: '예약 건수' },
    { x: 233, color: '#3fca9a', fill: '#fff', dash: '2 1', text: '총 인원' }
  ], 8);
}

function dailyChart() {
  const svg = document.getElementById('dailyChart');
  const box = { left: 22.5, right: 454.5, top: 14, bottom: 131 };
  const days = ['03-14', '03-15', '03-16', '03-17', '03-18', '03-19', '03-20', '03-21', '03-22', '03-23', '03-25', '03-26', '03-28', '03-29', '03-30', '03-31', '04-01', '04-02', '04-03', '04-04', '04-05', '04-06', '04-07', '04-08', '04-09', '04-10', '04-11'];
  const bookings = [12, 20, 8, 28, 13, 10, 11, 12, 44, 16, 38, 22, 33, 61, 35, 22, 30, 30, 55, 72, 99, 62, 38, 43, 30, 26, 42];
  const people = [32, 64, 28, 46, 38, 35, 29, 37, 147, 45, 90, 55, 95, 177, 103, 54, 82, 89, 153, 215, 296, 186, 123, 136, 108, 86, 133];
  const step = (box.right - box.left) / (days.length - 1);
  yAxis(svg, box, 300, 50, '');
  days.forEach((day, i) => {
    const x = box.left + i * step;
    vline(svg, box, x);
    label(svg, x + 1, 137, '2025-' + day, 'end', 'ko', -28);
  });
  drawLine(svg, box, 300, bookings, '#5b78cf', 'none', BLUE, 1);
  drawLine(svg, box, 300, people, '#3fca9a', '2 1', '', 1);
  trendLegend(svg);
}

// Daily people of the month
function monthDays() {
  const svg = document.getElementById('monthDays');
  const box = { left: 17.5, right: 215.5, top: 15.5, bottom: 100.5 };
  const total = [82, 90, 155, 215, 297, 186, 125, 136, 110, 88, 133, 220, 92, 62, 42, 35, 52, 88, 155, 45, 8, 22, 22, 27, 65, 112, 35, 12, 26, 20];
  const sale = [4, 3, 3, 7, 6, 6, 4, 1, 1, 1, 1, 4, 2, 1, 1, 1, 1, 1, 2, 1, 0, 1, 1, 1, 1, 2, 1, 1, 1, 2];
  const step = (box.right - box.left) / (total.length - 1);
  yAxis(svg, box, 300, 50, '명');
  vline(svg, box, box.left);
  for (let i = 0; i < 30; i += 2) label(svg, box.left + i * step + 1, 108.5, (i + 1) + '일', 'middle', 'ko', -50);
  drawLine(svg, box, 300, total, '#6079cc', '2 0.7', BLUE, 0.7);
  drawLine(svg, box, 300, sale, PURPLE, '2 1', '', 0.7);
  const x = box.left + 10 * step;
  add(svg, 'path', { d: `M${x} ${box.top}V${box.bottom}`, stroke: '#e53935' });
  add(svg, 'rect', { x: 28, y: 52.5, width: 116, height: 11, rx: 1.5, fill: '#e6252d' });
  label(svg, 86, 58, '오늘 (총 133명): 성인 110명, 청소년 2명, 어린이 21명, 할인 0명)', 'middle', 'note');
  legend(svg, [
    { x: 74, color: BLUE, fill: '#e9eefb', text: '총 인원' },
    { x: 108, color: PURPLE, fill: '#f5e9f8', dash: '2 1', text: '할인 인원' }
  ], 10);
}

// People by type
function typeRatio() {
  const svg = document.getElementById('typeRatio');
  const parts = [['성인', 2360, BLUE], ['청소년', 36, GREEN], ['어린이', 328, YELLOW], ['할인', 27, PURPLE]];
  const sum = parts.reduce((s, p) => s + p[1], 0);
  const cx = 91, cy = 60, r = 55.5, q = 36.5;
  let a = -Math.PI / 2;
  parts.forEach((p, i) => {
    const b = a + 2 * Math.PI * p[1] / sum;
    const big = b - a > Math.PI ? 1 : 0;
    const at = (rad, t) => `${cx + rad * Math.cos(t)} ${cy + rad * Math.sin(t)}`;
    add(svg, 'path', {
      d: `M${at(r, a)}A${r} ${r} 0 ${big} 1 ${at(r, b)}L${at(q, b)}A${q} ${q} 0 ${big} 0 ${at(q, a)}Z`,
      fill: p[2], stroke: '#fff', 'stroke-width': 0.6
    });
    a = b;
    const y = 47.5 + i * 8.3;
    add(svg, 'rect', { x: 185, y: y - 2, width: 14, height: 4, fill: p[2] });
    label(svg, 202, y, p[0]);
  });
}

// People by course, stacked
function courseChart() {
  const svg = document.getElementById('courseChart');
  const box = { left: 21.5, right: 458, top: 16, bottom: 105 };
  const names = ['세계유산투어', '경주야경투어', '동해안투어', '경주야경투어(Lite)', '양동마을/남산권코스', '신라역사투어'];
  const stacks = [[1165, 22, 206, 0], [655, 13, 75, 34], [312, 3, 6, 0], [168, 6, 40, 0], [24, 3, 0, 0], [12, 0, 3, 0]];
  const colors = [BLUE, GREEN, YELLOW, '#a52a83'];
  const w = (box.right - box.left) / names.length;
  yAxis(svg, box, 1400, 200, '명');
  for (let i = 0; i <= names.length; i++) vline(svg, box, box.left + i * w);
  names.forEach((name, i) => {
    let y = box.bottom;
    stacks[i].forEach((v, k) => {
      const h = (box.bottom - box.top) * v / 1400;
      y -= h;
      add(svg, 'rect', { x: box.left + i * w + 10, y, width: 52.5, height: h, fill: colors[k] });
    });
    label(svg, box.left + (i + 0.5) * w, 112, name, 'middle');
  });
  legend(svg, [
    { x: 168, color: BLUE, text: '성인' },
    { x: 198, color: GREEN, text: '청소년' },
    { x: 231, color: YELLOW, text: '어린이' },
    { x: 264, color: PURPLE, text: '할인' }
  ], 9.5);
}

productChart();
dailyChart();
trendLegend(document.getElementById('monthlyChart'));
monthDays();
typeRatio();
courseChart();
```
